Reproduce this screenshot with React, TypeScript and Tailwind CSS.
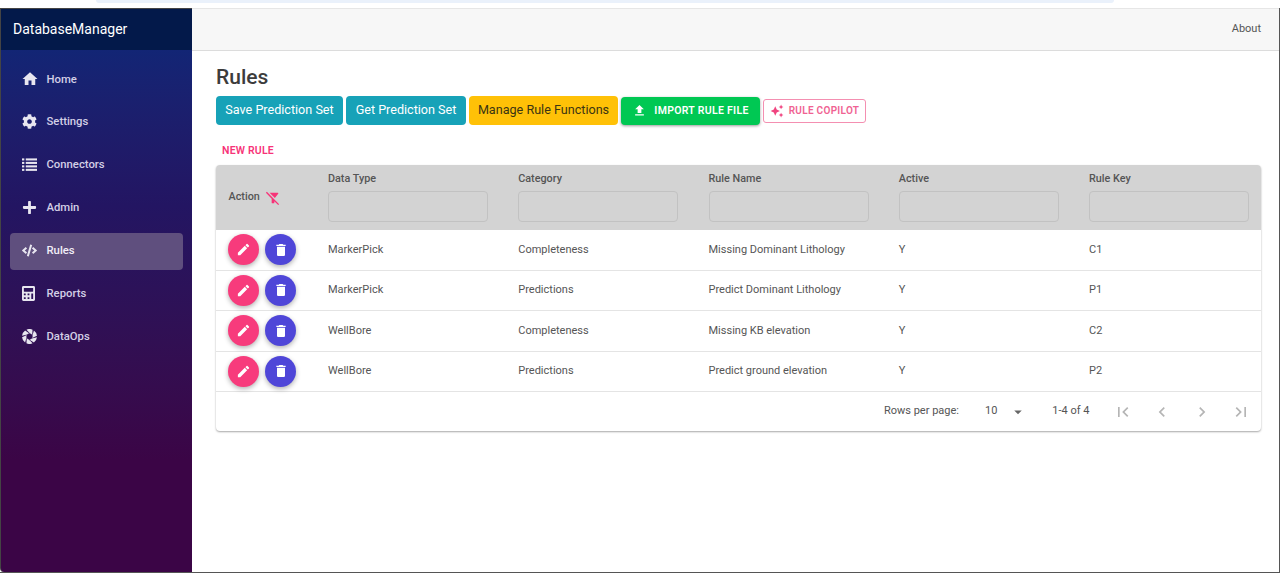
import React from 'react';
import { FaCog, FaPlus, FaCode, FaCalculator } from 'react-icons/fa';
import {
  MdHome,
  MdEdit,
  MdDelete,
  MdFileUpload,
  MdAutoAwesome,
  MdFilterAltOff,
  MdArrowDropDown,
  MdFirstPage,
  MdLastPage,
  MdChevronLeft,
  MdChevronRight,
} from 'react-icons/md';

const point = (r: number, deg: number) => {
  const a = (deg * Math.PI) / 180;
  return `${(12 + r * Math.cos(a)).toFixed(2)} ${(12 + r * Math.sin(a)).toFixed(2)}`;
};

// swirl of six blades around an open centre
const ApertureIcon: React.FC = () => (
  <svg viewBox="0 0 24 24" className="w-[15px] h-[15px]" fill="currentColor">
    {[0, 60, 120, 180, 240, 300].map(a => (
      <path
        key={a}
        d={`M${point(12, a + 6)} A12 12 0 0 1 ${point(12, a + 54)} L${point(5, a + 90)} A5 5 0 0 0 ${point(5, a + 42)} Z`}
      />
    ))}
  </svg>
);

const ListIcon: React.FC = () => (
  <svg viewBox="0 0 16 16" className="w-[15px] h-[15px]" fill="currentColor">
    <rect x="0" y="1.5" width="2.5" height="2.2" />
    <rect x="4" y="1.5" width="12" height="2.2" />
    <rect x="0" y="5.2" width="2.5" height="2.2" />
    <rect x="4" y="5.2" width="12" height="2.2" />
    <rect x="0" y="8.9" width="2.5" height="2.2" />
    <rect x="4" y="8.9" width="12" height="2.2" />
    <rect x="0" y="12.6" width="2.5" height="2.2" />
    <rect x="4" y="12.6" width="12" height="2.2" />
  </svg>
);

const navItems = [
  { label: 'Home', icon: <MdHome className="w-[18px] h-[18px] -ml-[1px]" /> },
  { label: 'Settings', icon: <FaCog className="w-[15px] h-[15px]" /> },
  { label: 'Connectors', icon: <ListIcon /> },
  { label: 'Admin', icon: <FaPlus className="w-[15px] h-[15px]" /> },
  { label: 'Rules', icon: <FaCode className="w-[15px] h-[15px]" />, active: true },
  { label: 'Reports', icon: <FaCalculator className="w-[13px] h-[15px]" /> },
  { label: 'DataOps', icon: <ApertureIcon /> },
];

const columns = ['Data Type', 'Category', 'Rule Name', 'Active', 'Rule Key'];

const rows = [
  ['MarkerPick', 'Completeness', 'Missing Dominant Lithology', 'Y', 'C1'],
  ['MarkerPick', 'Predictions', 'Predict Dominant Lithology', 'Y', 'P1'],
  ['WellBore', 'Completeness', 'Missing KB elevation', 'Y', 'C2'],
  ['WellBore', 'Predictions', 'Predict ground elevation', 'Y', 'P2'],
];

const gridCols = 'grid grid-cols-[112px_190.25px_190.25px_190.25px_190.25px_1fr]';

const App: React.FC = () => {
  return (
    <div className="h-[575px] w-[1280px] overflow-hidden bg-white font-['Roboto',sans-serif] flex flex-col">
      <div className="h-[8px] bg-white shrink-0 pl-[96px] pr-[166px]">
        <div className="h-[3px] bg-[#eaf1fb] rounded-b-lg" />
      </div>
      <div className="h-[565px] shrink-0 flex border-r border-b border-[#555]">
        <aside className="w-[192px] shrink-0 bg-gradient-to-b from-[#08297a] via-[#231562] via-35% to-[#3b0546] to-80% border-l border-t border-[#444] rounded-bl-[4px] flex flex-col text-white">
          <div className="h-[41px] bg-[#03194a] flex items-center pl-[12px] text-[14px] shrink-0">DatabaseManager</div>
          <nav className="pt-[11.5px] px-[9px] flex flex-col gap-[5.9px]">
            {navItems.map(item => (
              <div
                key={item.label}
                className={`h-[37px] rounded flex items-center text-[11.3px] font-medium ${item.active ? 'bg-[#5f4f7e] text-[#f1edf7]' : 'text-[#d3cfe6]'}`}
              >
                <span className="w-[36.5px] pl-[12px] flex items-center -translate-y-[1px] text-[#e8e6f0]">{item.icon}</span>
                {item.label}
              </div>
            ))}
          </nav>
        </aside>

        <div className="flex-1 min-w-0 flex flex-col">
          <header className="h-[43px] shrink-0 bg-[#f7f7f7] border-t border-b border-t-[#e6e6e6] border-b-[#dcdcdc] flex items-center justify-end pr-[18px] text-[11px] text-[#555]">
            About
          </header>
          <main className="pl-[24px] pr-[18px]">
            <h1 className="text-[21px] leading-[24px] font-medium text-[#3c3c3c] pt-[14px] mb-[7px]">Rules</h1>
            <div className="flex items-center gap-[3px] h-[29px]">
              <button className="h-[29px] w-[127px] rounded bg-[#17a2b8] text-white text-[12.6px]">Save Prediction Set</button>
              <button className="h-[29px] w-[120px] rounded bg-[#17a2b8] text-white text-[12.6px]">Get Prediction Set</button>
              <button className="h-[29px] w-[149px] rounded bg-[#ffc107] text-[#3a3413] text-[12.6px]">Manage Rule Functions</button>
              <button className="h-[28px] w-[139px] rounded bg-[#00c853] text-white text-[10.5px] font-semibold tracking-[0.3px] flex items-center justify-center gap-[7px] shadow-[0_1px_3px_rgba(0,0,0,0.4)]">
                <MdFileUpload className="w-[15px] h-[15px]" />
                IMPORT RULE FILE
              </button>
              <button className="h-[24px] w-[103px] rounded-[3px] border border-[#f48fb1] text-[#f06292] text-[10px] font-semibold tracking-[0.3px] flex items-center justify-center gap-[5px]">
                <MdAutoAwesome className="w-[14px] h-[14px] text-[#f0437f]" />
                RULE COPILOT
              </button>
            </div>

            <button className="block mt-[19px] ml-[6px] h-[14px] leading-[14px] text-[10.5px] font-semibold tracking-[0.2px] text-[#f73378]">NEW RULE</button>

            <div className="mt-[7px] w-[1045px] rounded bg-white shadow-[0_1px_2px_rgba(0,0,0,0.35)]">
              <div className={`${gridCols} h-[65px] bg-[#d3d3d3] rounded-t text-[10.8px] font-medium text-[#555]`}>
                <div className="flex items-center pl-[12.5px] gap-[5px]">
                  Action
                  <MdFilterAltOff className="w-[16px] h-[16px] text-[#f73378]" />
                </div>
                {columns.map(col => (
                  <div key={col} className="pt-[7px]">
                    <div className="h-[13px] leading-[13px]">{col}</div>
                    <input className="block mt-[6px] h-[31px] w-[160px] border border-[#c2c2c2] rounded bg-[#d3d3d3]" />
                  </div>
                ))}
              </div>
              {rows.map(row => (
                <div key={row[4]} className={`${gridCols} h-[40.5px] border-b border-[#e4e4e4] text-[11px] text-[#555] items-center`}>
                  <div className="flex items-center gap-[6px] pl-[12px]">
                    <button className="w-[31px] h-[31px] rounded-full bg-[#f73b7c] text-white flex items-center justify-center shadow-[0_2px_5px_rgba(0,0,0,0.3)]">
                      <MdEdit className="w-[15px] h-[15px]" />
                    </button>
                    <button className="w-[31px] h-[31px] rounded-full bg-[#4f46d8] text-white flex items-center justify-center shadow-[0_2px_5px_rgba(0,0,0,0.3)]">
                      <MdDelete className="w-[16px] h-[16px]" />
                    </button>
                  </div>
                  {row.map((cell, i) => (
                    <div key={i}>{cell}</div>
                  ))}
                </div>
              ))}
              <div className="h-[39px] flex items-center justify-end text-[11px] text-[#555] pr-[10px]">
                <span>Rows per page:</span>
                <span className="ml-[26px]">10</span>
                <MdArrowDropDown className="ml-[11.5px] w-[18px] h-[18px] text-[#666]" />
                <span className="ml-[25.5px]">1-4 of 4</span>
                <div className="ml-[23px] flex items-center gap-[19.5px] text-[#b5b5b5]">
                  <MdFirstPage className="w-[20px] h-[20px]" />
                  <MdChevronLeft className="w-[20px] h-[20px]" />
                  <MdChevronRight className="w-[20px] h-[20px]" />
                  <MdLastPage className="w-[20px] h-[20px]" />
                </div>
              </div>
            </div>
          </main>
        </div>
      </div>
    </div>
  );
};

export default App;
